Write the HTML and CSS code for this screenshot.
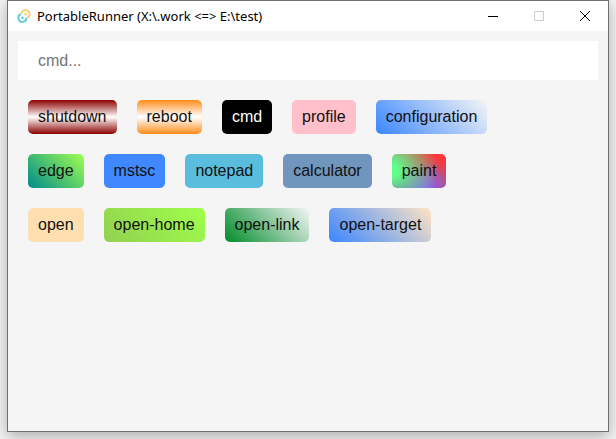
FILE: index.html
```
<!DOCTYPE html>
<html lang="en">
<head>
<meta charset="utf-8">
<title>PortableRunner</title>
<link rel="stylesheet" href="styles.css">
</head>
<body>
<div class="window">
  <header class="titlebar">
    <svg class="logo" viewBox="0 0 14 14" aria-hidden="true">
      <path d="M4.6 5.2A4 4 0 1 1 10.2 8.8" fill="none" stroke="#fccf72" stroke-width="1.9"/>
      <circle cx="8.5" cy="5.2" r="1.3" fill="#fccf72"/>
      <path d="M9.4 8.8A4 4 0 1 1 3.8 5.2" fill="none" stroke="#5bcbdc" stroke-width="1.9"/>
      <circle cx="5.5" cy="8.8" r="1.3" fill="#5bcbdc"/>
    </svg>
    <h1 class="title">PortableRunner (X:\.work &lt;=&gt; E:\test)</h1>
    <div class="controls">
      <button class="control" type="button" aria-label="Minimize"><svg viewBox="0 0 10 10"><path d="M0 5.5H10"/></svg></button>
      <button class="control" type="button" aria-label="Maximize" disabled><svg viewBox="0 0 10 10"><path d="M.5 .5H9.5V9.5H.5Z"/></svg></button>
      <button class="control" type="button" aria-label="Close"><svg viewBox="0 0 10 10"><path d="M0 0L10 10M10 0L0 10"/></svg></button>
    </div>
  </header>
  <main class="content">
    <input class="command" type="text" placeholder="cmd..." aria-label="Command">
    <div class="groups">
      <div class="group">
        <button type="button" class="item shutdown">shutdown</button>
        <button type="button" class="item reboot">reboot</button>
        <button type="button" class="item cmd">cmd</button>
        <button type="button" class="item profile">profile</button>
        <button type="button" class="item configuration">configuration</button>
      </div>
      <div class="group">
        <button type="button" class="item edge">edge</button>
        <button type="button" class="item mstsc">mstsc</button>
        <button type="button" class="item notepad">notepad</button>
        <button type="button" class="item calculator">calculator</button>
        <button type="button" class="item paint">paint</button>
      </div>
      <div class="group">
        <button type="button" class="item open">open</button>
        <button type="button" class="item open-home">open-home</button>
        <button type="button" class="item open-link">open-link</button>
        <button type="button" class="item open-target">open-target</button>
      </div>
    </div>
  </main>
</div>
</body>
</html>
```
FILE: styles.css
```
* {
  box-sizing: border-box;
}

body {
  display: flex;
  min-height: 100vh;
  margin: 0;
  padding: 0 7px 7px;
  overflow: hidden;
  background: #f4f4f4;
  font-family: "Liberation Sans", Arial, sans-serif;
  font-size: 16px;
}

.window {
  flex: 1;
  border: 1px solid #707070;
  background: #f5f5f5;
  box-shadow: 0 4px 14px rgba(0, 0, 0, 0.3);
}

.titlebar {
  display: flex;
  align-items: center;
  height: 30px;
  padding-left: 9px;
  background: #fff;
}

.logo {
  width: 14px;
  height: 14px;
}

.title {
  flex: 1;
  margin: 0 0 0 6px;
  color: #000;
  font-family: "Noto Sans", sans-serif;
  font-size: 13px;
  font-weight: 400;
  line-height: 18px;
}

.controls {
  display: flex;
}

.control {
  display: flex;
  align-items: center;
  justify-content: center;
  width: 46px;
  height: 30px;
  padding: 0;
  border: 0;
  background: none;
  color: #000;
}

.control:disabled {
  color: #ccc;
}

.control svg {
  width: 10px;
  height: 10px;
  fill: none;
  stroke: currentColor;
}

.content {
  padding: 10px;
}

.command {
  display: block;
  width: 100%;
  height: 39px;
  padding: 0 20px;
  border: 0;
  outline: 0;
  background: #fff;
  font: inherit;
}

.command::placeholder {
  color: #757575;
}

.groups {
  display: grid;
  gap: 20px;
  padding: 20px 10px;
}

.group {
  display: flex;
  flex-wrap: wrap;
  gap: 20px;
}

.item {
  height: 34px;
  padding: 0 10px;
  border: 0;
  border-radius: 5px;
  color: #111;
  font: inherit;
  line-height: 34px;
}

.shutdown { background: linear-gradient(#8b0000, #fff, #8b0000); }
.reboot { background: linear-gradient(#ff8c1a, #fff, #ff8c1a); }
.cmd { background: #000; color: #fff; }
.profile { background: #ffc0cb; }
.configuration { background: linear-gradient(45deg, #3a86ff, #f5f5f5); }
.edge { background: linear-gradient(45deg, #008b8b, #a0ff50); }
.mstsc { background: #3f88ff; }
.notepad { background: #5bbddd; }
.calculator { background: #7096be; }
.open { background: #ffdfb0; }
.open-home { background: linear-gradient(45deg, #92d050, #a0ff4b); }
.open-link { background: linear-gradient(45deg, #008b2b, #f5f5f5); }
.open-target { background: linear-gradient(45deg, #3a86ff, #ffe4c4); }

.paint {
  background:
    radial-gradient(circle at 0 50%, #60ff88 10%, rgba(96, 255, 136, 0) 46px),
    radial-gradient(circle at 60% 110%, #8c64ff, rgba(140, 100, 255, 0) 30px),
    linear-gradient(200deg, #ff3838 10%, #b05080 60%, #8020b0 90%);
}
```
